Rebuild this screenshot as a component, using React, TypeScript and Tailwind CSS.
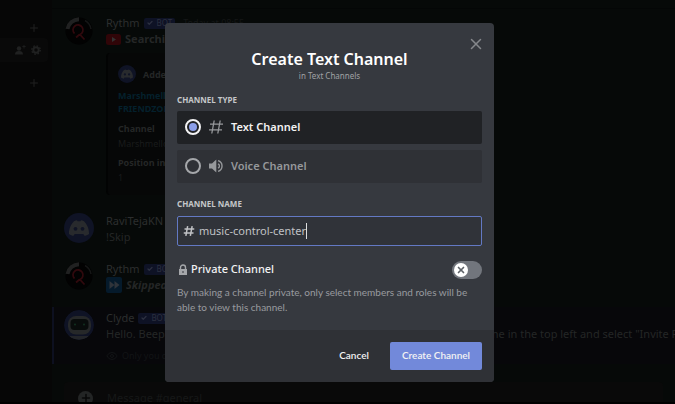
import React, { useState } from 'react';
import { Check, Eye, Plus, X } from 'lucide-react';

interface AvatarProps {
  className?: string;
}

function RythmAvatar({ className = '' }: AvatarProps) {
  return (
    <svg viewBox="0 0 30 30" className={`h-[30px] w-[30px] shrink-0 ${className}`} aria-hidden="true">
      <circle cx="15" cy="15" r="13.5" fill="#020202" />
      <path d="M3.5 13A12 12 0 0 1 15 3.2" fill="none" stroke="#202121" strokeWidth="4" />
      <path d="M21 4.5A12 12 0 0 1 27 13" fill="none" stroke="#151616" strokeWidth="1.5" />
      <path d="M10.5 17.5a5 5 0 1 1 5.5 1l4.5 5M15.5 18.5l-3.5 3" fill="none" stroke="#30090d" strokeWidth="1.8" />
    </svg>
  );
}

function DiscordAvatar({ className = '' }: AvatarProps) {
  return (
    <svg viewBox="0 0 30 30" className={`shrink-0 rounded-full bg-[#0f1325] ${className}`} aria-hidden="true">
      <path
        d="M10 8.2c1.200-.6 2.300-.9 3-.9l.5 1h3l.5-1c.7 0 1.800.3 3 .9 3 2.800 5.200 7.600 5 12.800-1.500 1.200-3.200 1.700-4.500 1.800l-1.200-1.900h-8.600l-1.200 1.900c-1.300-.1-3-.6-4.500-1.800-.2-5.200 2-10 5-12.800z"
        fill="#282a2d"
      />
      <circle cx="11.500" cy="15.800" r="1.900" fill="#0f1325" />
      <circle cx="18.500" cy="15.800" r="1.900" fill="#0f1325" />
    </svg>
  );
}

function ClydeAvatar() {
  return (
    <svg viewBox="0 0 30 30" className="h-[30px] w-[30px] shrink-0 rounded-full" aria-hidden="true">
      <circle cx="15" cy="15" r="15" fill="#0f1325" />
      <path d="M5 26h20a15 15 0 0 1-20 0z" fill="#232529" />
      <rect x="4" y="6" width="23" height="18.500" rx="8" fill="#262829" />
      <rect x="6.500" y="9" width="18" height="11" rx="4" fill="#080c0b" />
      <circle cx="11" cy="14.500" r="1" fill="#12301f" />
      <circle cx="20" cy="14.500" r="1" fill="#12301f" />
    </svg>
  );
}

function BotTag() {
  return (
    <span className="flex h-[11px] items-center gap-1 rounded-xs bg-[#0e1225] px-[3px] text-[8px] leading-none text-[#2c3040]">
      <Check className="h-[6px] w-[6px] stroke-5" />
      BOT
    </span>
  );
}

interface MessageProps {
  avatar: React.ReactNode;
  author: string;
  bot?: boolean;
  time?: string;
  className?: string;
  children: React.ReactNode;
}

function Message({ avatar, author, bot, time, className = '', children }: MessageProps) {
  return (
    <div className={`flex gap-3 pl-3 ${className}`}>
      {avatar}
      <div className="min-w-0 flex-1 text-[11px] leading-4 text-[#242626]">
        <div className="flex items-center gap-1 whitespace-nowrap text-[#2c2e2e]">
          <span>{author}</span>
          {bot && <BotTag />}
          {time && <span className="ml-1 text-[9px] text-[#151717]">{time}</span>}
        </div>
        {children}
      </div>
    </div>
  );
}

function Sidebar() {
  return (
    <aside className="flex w-[52px] shrink-0 flex-col bg-[#060606] pt-[22px] text-[#202121]">
      <button aria-label="Create channel" className="mr-3 self-end">
        <Plus className="h-3 w-3" />
      </button>
      <div className="mt-1 mr-1 flex h-6 items-center justify-end gap-1 rounded-r-sm bg-[#090909] pr-[6px]">
        <svg viewBox="0 0 12 12" className="h-3 w-3" fill="currentColor" aria-hidden="true">
          <circle cx="5" cy="4.500" r="2.200" />
          <path d="M1 10.500c0-2.500 1.500-3.500 4-3.500s4 1 4 3.500z" />
          <path d="M9.600 1h.8v1.300h1.300v.8h-1.300v1.300h-.8V3.100H8.300v-.8h1.300z" />
        </svg>
        <svg viewBox="0 0 12 12" className="h-3 w-3" aria-hidden="true">
          <circle cx="6" cy="6" r="2.700" fill="none" stroke="currentColor" strokeWidth="2" />
          <circle cx="6" cy="6" r="4.200" fill="none" stroke="currentColor" strokeWidth="1.400" strokeDasharray="1.650 1.650" />
        </svg>
      </div>
      <button aria-label="Create voice channel" className="mt-[15px] mr-3 self-end">
        <Plus className="h-3 w-3" />
      </button>
    </aside>
  );
}

function Chat() {
  return (
    <main className="flex min-w-0 flex-1 flex-col overflow-hidden bg-[#060908] pt-2">
      <div className="border-t border-[#040606]" />
      <Message avatar={<RythmAvatar className="mt-[1px]" />} author="Rythm" bot time="Today at 08:55" className="pt-[6px]">
        <p className="flex items-center gap-1 font-bold">
          <svg viewBox="0 0 15 11" className="h-[11px] w-[15px]" aria-hidden="true">
            <rect width="15" height="11" rx="2.500" fill="#300508" />
            <path d="M6 3l4 2.500L6 8z" fill="#333" />
          </svg>
          Searching
        </p>
        <div className="mt-[6px] w-[380px] rounded-sm border-l-2 border-[#020303] bg-[#060707] px-[10px] pt-3 pb-[10px] text-[9px] leading-[15px]">
          <div className="flex items-center gap-[7px] font-bold">
            <DiscordAvatar className="h-[18px] w-[18px]" />
            Added to queue
          </div>
          <p className="mt-[6px] leading-[13px] font-bold text-[#04202c]">
            Marshmello
            <br />
            FRIENDZONED
          </p>
          <p className="mt-[6px] font-bold">Channel</p>
          <p className="text-[#191b1b]">Marshmello</p>
          <p className="mt-1 font-bold">Position in queue</p>
          <p className="text-[#191b1b]">1</p>
        </div>
      </Message>
      <Message avatar={<DiscordAvatar className="h-[30px] w-[30px]" />} author="RaviTejaKN" className="mt-[18px]">
        <p>!Skip</p>
      </Message>
      <Message avatar={<RythmAvatar />} author="Rythm" bot className="mt-4">
        <p className="flex items-center gap-1 font-bold italic">
          <svg viewBox="0 0 16 16" className="h-4 w-4" aria-hidden="true">
            <rect width="16" height="16" rx="2" fill="#051a2b" />
            <path d="M3.500 4l5 4-5 4zM8.500 4l5 4-5 4z" fill="#30343a" />
          </svg>
          Skipped
        </p>
      </Message>
      <div className="mt-[14px] border-l-2 border-[#0d1020] bg-[#07070a] pt-[3px]">
        <Message avatar={<ClydeAvatar />} author="Clyde" bot className="-ml-[2px]">
          <p className="whitespace-nowrap">
            Hello. Beep. Boop. If you wanna invite friends to this server, click server name in the top left and select "Invite People".
          </p>
          <p className="mt-[6px] flex items-center gap-1 text-[9px] text-[#121416]">
            <Eye className="h-3 w-3" />
            Only you can see this
          </p>
        </Message>
      </div>
      <div className="mx-3 mt-[18px] flex h-8 shrink-0 items-center gap-[14px] rounded-sm bg-[#090909] pl-[14px] text-[11px] text-[#161818]">
        <span className="flex h-[15px] w-[15px] items-center justify-center rounded-full bg-[#232525] text-[#090909]">
          <Plus className="h-3 w-3 stroke-3" />
        </span>
        Message #general
      </div>
    </main>
  );
}

function HashIcon({ className = '' }: AvatarProps) {
  return (
    <svg viewBox="0 0 16 16" className={className} fill="none" stroke="currentColor" strokeWidth="1.300" aria-hidden="true">
      <path d="M6.200 1.500L3.800 14.500M12.200 1.500L9.800 14.500M2 5.200h13M1 10.800h13" />
    </svg>
  );
}

function SpeakerIcon() {
  return (
    <svg viewBox="0 0 16 16" className="h-4 w-4" fill="none" stroke="currentColor" strokeWidth="1.400" aria-hidden="true">
      <path d="M1 5.500h3L8.300 1.500v13L4 10.500H1z" fill="currentColor" stroke="none" />
      <path d="M10 5.800a2.400 2.400 0 0 1 0 4.400M10 2.700a5.500 5.500 0 0 1 0 10.600" />
    </svg>
  );
}

interface ChannelOptionProps {
  label: string;
  icon: React.ReactNode;
  selected: boolean;
  onSelect: () => void;
}

function ChannelOption({ label, icon, selected, onSelect }: ChannelOptionProps) {
  return (
    <label
      className={`flex h-[33px] cursor-pointer items-center gap-[7px] rounded-xs px-2 text-[11px] font-semibold ${
        selected ? 'bg-[#202225] text-[#f2f2f3]' : 'bg-[#2f3136] text-[#96989b]'
      }`}
    >
      <input type="radio" name="channel-type" checked={selected} onChange={onSelect} className="peer sr-only" />
      <span
        className={`flex h-4 w-4 items-center justify-center rounded-full border-2 ${
          selected ? 'border-[#f2f2f3]' : 'border-[#a5a7aa]'
        }`}
      >
        {selected && <span className="h-2 w-2 rounded-full bg-[#8b9ee8]" />}
      </span>
      <span className="text-[#96989b]">{icon}</span>
      {label}
    </label>
  );
}

function CreateChannelDialog() {
  const [type, setType] = useState('text');
  const [name, setName] = useState('music-control-center');
  const [isPrivate, setIsPrivate] = useState(false);

  return (
    <div role="dialog" aria-labelledby="dialog-title" className="w-full max-w-[329px] overflow-hidden rounded-[4px] bg-[#36393f]">
      <div className="px-3 pt-3 pb-[15px]">
        <div className="flex h-4 justify-end">
          <button aria-label="Close" className="-mr-[3px] text-[#85878b]">
            <X className="h-[18px] w-[18px]" />
          </button>
        </div>
        <h1 id="dialog-title" className="-mt-1 text-center text-[16px] leading-6 font-semibold text-white">
          Create Text Channel
        </h1>
        <p className="text-center text-[8px] leading-[10px] text-[#a0a2a5]">in Text Channels</p>

        <fieldset className="mt-[13px]">
          <legend className="text-[8px] leading-3 font-bold text-[#c5c7c9]">CHANNEL TYPE</legend>
          <div className="mt-[5px] flex flex-col gap-[6px]">
            <ChannelOption
              label="Text Channel"
              icon={<HashIcon className="h-4 w-4" />}
              selected={type === 'text'}
              onSelect={() => setType('text')}
            />
            <ChannelOption
              label="Voice Channel"
              icon={<SpeakerIcon />}
              selected={type === 'voice'}
              onSelect={() => setType('voice')}
            />
          </div>
        </fieldset>

        <label htmlFor="channel-name" className="mt-[15px] block text-[8px] leading-3 font-bold text-[#c5c7c9]">
          CHANNEL NAME
        </label>
        <div className="mt-[6px] flex h-[30px] items-center gap-1 rounded-xs border border-[#6379c4] bg-[#303339] px-[5px] text-[#c0c2c5]">
          <HashIcon className="h-3 w-3 stroke-2" />
          {/* Sizer keeps the caret right behind the typed text */}
          <span className="relative inline-block border-r border-[#dcddde] text-[11px] leading-4">
            <span className="invisible whitespace-pre">{name}</span>
            <input
              id="channel-name"
              value={name}
              onChange={(e) => setName(e.target.value)}
              className="absolute inset-0 w-full bg-transparent outline-none"
            />
          </span>
        </div>

        <div className="mt-[15px] flex h-[18px] items-center justify-between">
          <label htmlFor="private" className="flex items-center gap-[2px] text-[11px] font-medium text-[#f2f2f3]">
            <svg viewBox="0 0 12 12" className="h-3 w-3 text-[#a5a7aa]" aria-hidden="true">
              <path d="M3.500 5.500V3.500a2.500 2.500 0 0 1 5 0v2" fill="none" stroke="currentColor" strokeWidth="1.400" />
              <path d="M2 5h8v6H2zM5.500 7v2h1V7z" fill="currentColor" fillRule="evenodd" />
            </svg>
            Private Channel
          </label>
          <button
            id="private"
            role="switch"
            aria-checked={isPrivate}
            onClick={() => setIsPrivate(!isPrivate)}
            className={`flex h-[18px] w-[30px] items-center rounded-full px-[2px] ${
              isPrivate ? 'justify-end bg-[#43b581]' : 'bg-[#72767d]'
            }`}
          >
            <span className="flex h-[14px] w-[14px] items-center justify-center rounded-full bg-white text-[#5e6268]">
              <X className="h-[10px] w-[10px] stroke-4" />
            </span>
          </button>
        </div>
        <p className="mt-[6px] font-[Lato,sans-serif] text-[10px] leading-[15px] text-[#999b9f]">
          By making a channel private, only select members and roles will be able to view this channel.
        </p>
      </div>

      <div className="flex items-center justify-end gap-[9px] bg-[#2f3136] p-3 font-[Lato,sans-serif] text-[10px] font-semibold text-[#f2f2f3]">
        <button className="h-7 px-3">Cancel</button>
        <button className="h-7 rounded-xs bg-[#7289da] px-3">Create Channel</button>
      </div>
    </div>
  );
}

export default function App() {
  return (
    <div className="h-screen bg-black pb-[2px]">
      <div className="relative flex h-full overflow-hidden font-['Noto_Sans',sans-serif]">
        <Sidebar />
        <Chat />
      </div>
      <div className="absolute inset-0 z-10 flex items-center justify-center pr-4 font-['Noto_Sans',sans-serif]">
        <CreateChannelDialog />
      </div>
    </div>
  );
}
